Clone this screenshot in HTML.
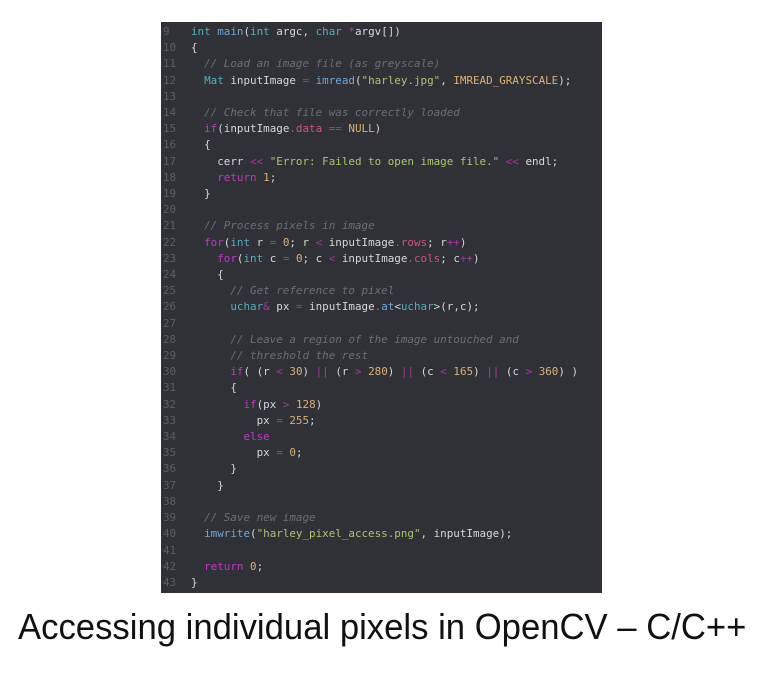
<!DOCTYPE html>
<html><head><meta charset="utf-8"><style>
html,body{margin:0;padding:0;background:#fff;width:784px;height:676px;overflow:hidden;position:relative}
#panel{position:absolute;left:161px;top:22px;width:441px;height:571px;background:#2f3137;overflow:hidden}
pre{margin:0;position:absolute;left:0;top:2px;font-family:"DejaVu Sans Mono","Liberation Mono",monospace;font-size:10.9px;line-height:16.2px;color:#d6d6d6}
.n{color:#5c5f66;display:inline-block;width:30px;padding-left:2px;box-sizing:border-box}
.t{color:#4fb0bd}.f{color:#6ea6d8}.s{color:#a9c56e}.c{color:#e0ae72}.k{color:#c435c4}.o{color:#a8389f}.m{color:#d2527e}.cm{color:#6b6e76;font-style:italic}
#cap{position:absolute;left:18px;top:606px;font-family:"Liberation Sans",sans-serif;font-size:36px;color:#111;white-space:nowrap;transform-origin:0 0;transform:scaleX(0.963)}
</style></head><body>
<div id="panel"><pre><span class="n">9</span><span class="t">int</span> <span class="f">main</span>(<span class="t">int</span> argc, <span class="t">char</span> <span class="o">*</span>argv[])
<span class="n">10</span>{
<span class="n">11</span>  <span class="cm">// Load an image file (as greyscale)</span>
<span class="n">12</span>  <span class="t">Mat</span> inputImage <span class="o">=</span> <span class="f">imread</span>(<span class="s">"harley.jpg"</span>, <span class="c">IMREAD_GRAYSCALE</span>);
<span class="n">13</span>
<span class="n">14</span>  <span class="cm">// Check that file was correctly loaded</span>
<span class="n">15</span>  <span class="k">if</span>(inputImage<span class="m">.data</span> <span class="o">==</span> <span class="c">NULL</span>)
<span class="n">16</span>  {
<span class="n">17</span>    cerr <span class="o">&lt;&lt;</span> <span class="s">"Error: Failed to open image file."</span> <span class="o">&lt;&lt;</span> endl;
<span class="n">18</span>    <span class="k">return</span> <span class="c">1</span>;
<span class="n">19</span>  }
<span class="n">20</span>
<span class="n">21</span>  <span class="cm">// Process pixels in image</span>
<span class="n">22</span>  <span class="k">for</span>(<span class="t">int</span> r <span class="o">=</span> <span class="c">0</span>; r <span class="o">&lt;</span> inputImage<span class="m">.rows</span>; r<span class="o">++</span>)
<span class="n">23</span>    <span class="k">for</span>(<span class="t">int</span> c <span class="o">=</span> <span class="c">0</span>; c <span class="o">&lt;</span> inputImage<span class="m">.cols</span>; c<span class="o">++</span>)
<span class="n">24</span>    {
<span class="n">25</span>      <span class="cm">// Get reference to pixel</span>
<span class="n">26</span>      <span class="t">uchar</span><span class="o">&amp;</span> px <span class="o">=</span> inputImage<span class="m">.</span><span class="f">at</span>&lt;<span class="t">uchar</span>&gt;(r,c);
<span class="n">27</span>
<span class="n">28</span>      <span class="cm">// Leave a region of the image untouched and</span>
<span class="n">29</span>      <span class="cm">// threshold the rest</span>
<span class="n">30</span>      <span class="k">if</span>( (r <span class="o">&lt;</span> <span class="c">30</span>) <span class="o">||</span> (r <span class="o">&gt;</span> <span class="c">280</span>) <span class="o">||</span> (c <span class="o">&lt;</span> <span class="c">165</span>) <span class="o">||</span> (c <span class="o">&gt;</span> <span class="c">360</span>) )
<span class="n">31</span>      {
<span class="n">32</span>        <span class="k">if</span>(px <span class="o">&gt;</span> <span class="c">128</span>)
<span class="n">33</span>          px <span class="o">=</span> <span class="c">255</span>;
<span class="n">34</span>        <span class="k">else</span>
<span class="n">35</span>          px <span class="o">=</span> <span class="c">0</span>;
<span class="n">36</span>      }
<span class="n">37</span>    }
<span class="n">38</span>
<span class="n">39</span>  <span class="cm">// Save new image</span>
<span class="n">40</span>  <span class="f">imwrite</span>(<span class="s">"harley_pixel_access.png"</span>, inputImage);
<span class="n">41</span>
<span class="n">42</span>  <span class="k">return</span> <span class="c">0</span>;
<span class="n">43</span>}</pre></div>
<div id="cap">Accessing individual pixels in OpenCV – C/C++</div>
</body></html>
